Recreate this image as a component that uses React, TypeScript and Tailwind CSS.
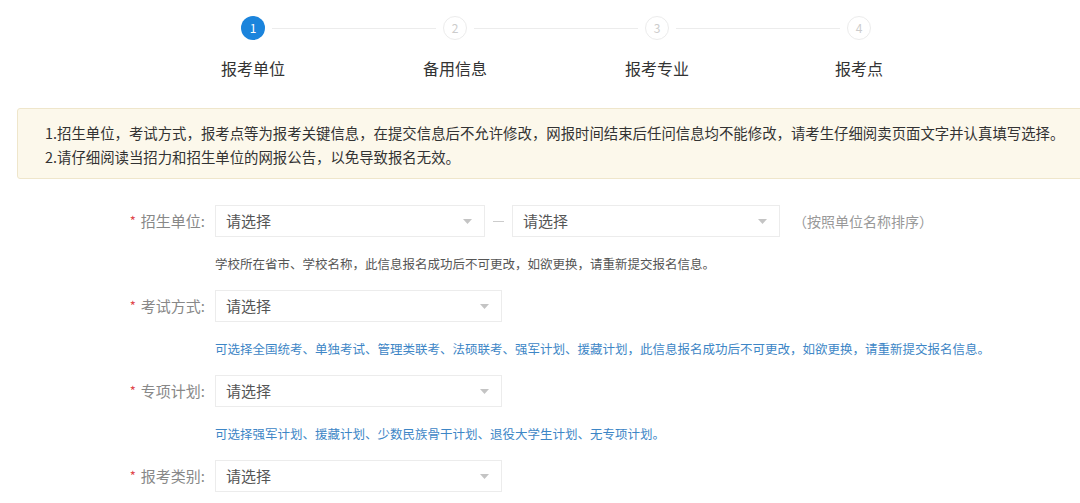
const font = { fontFamily: '"Microsoft YaHei", "Noto Sans CJK SC", "Noto Sans", sans-serif' };

const steps = ["报考单位", "备用信息", "报考专业", "报考点"];

function Caret() {
  return (
    <svg width="9" height="5" viewBox="0 0 9 5" className="shrink-0">
      <path d="M0 0 L9 0 L4.5 5 Z" fill="#c4c4c4" />
    </svg>
  );
}

function Select({ width }: { width: string }) {
  return (
    <div
      className={`flex h-[32px] items-center justify-between border border-[#ececec] bg-white pl-[10px] pr-[12px] text-[15px] text-[#555] ${width}`}
    >
      <span>请选择</span>
      <Caret />
    </div>
  );
}

function Label({ text }: { text: string }) {
  return (
    <div className="flex w-[205px] shrink-0 items-center justify-end text-[15px] text-[#888]">
      <span className="mr-[5px] text-[13px] text-[#e0474c]">*</span>
      <span>{text}:</span>
    </div>
  );
}

export default function App() {
  return (
    <div className="h-[503px] w-[1080px] overflow-hidden bg-white" style={font}>
      {/* steps */}
      <div className="flex items-center pl-[241px] pt-[16px]">
        {steps.map((s, i) => (
          <div key={s} className="flex items-center">
            <div
              className={
                i === 0
                  ? "flex h-[24px] w-[24px] items-center justify-center rounded-full bg-[#1b84dc] text-[12px] text-white"
                  : "flex h-[24px] w-[24px] items-center justify-center rounded-full border border-[#ececec] text-[12px] text-[#ccc]"
              }
            >
              {i + 1}
            </div>
            {i < steps.length - 1 && <div className="mx-[7px] h-px w-[164px] bg-[#ececec]" />}
          </div>
        ))}
      </div>
      <div className="mt-[16px] flex pl-[152px]">
        {steps.map((s) => (
          <div key={s} className="w-[202px] text-center text-[16px] leading-[24px] text-[#333]">
            {s}
          </div>
        ))}
      </div>

      {/* notice */}
      <div className="ml-[17px] mt-[28px] w-[1100px] rounded-[3px] border border-[#efe6cb] bg-[#fcf8eb] pb-[9px] pl-[27px] pt-[12px] text-[14.4px] leading-[24px] text-[#333]">
        <p>1.招生单位，考试方式，报考点等为报考关键信息，在提交信息后不允许修改，网报时间结束后任问信息均不能修改，请考生仔细阅卖页面文字并认真填写选择。</p>
        <p>2.请仔细阅读当招力和招生单位的网报公告，以免导致报名无效。</p>
      </div>

      {/* form */}
      <div className="mt-[26px] flex flex-col gap-[16px]">
        <div>
          <div className="flex items-center">
            <Label text="招生单位" />
            <div className="ml-[10px] flex items-center">
              <Select width="w-[270px]" />
              <span className="mx-[8px] h-px w-[11px] bg-[#ccc]" />
              <Select width="w-[268px]" />
              <span className="ml-[13px] text-[14px] text-[#999]">（按照单位名称排序）</span>
            </div>
          </div>
          <p className="ml-[215px] mt-[17px] text-[12.5px] leading-[20px] text-[#555]">
            学校所在省市、学校名称，此信息报名成功后不可更改，如欲更换，请重新提交报名信息。
          </p>
        </div>

        <div>
          <div className="flex items-center">
            <Label text="考试方式" />
            <div className="ml-[10px]">
              <Select width="w-[287px]" />
            </div>
          </div>
          <p className="ml-[215px] mt-[17px] text-[12.5px] leading-[20px] text-[#3d86c6]">
            可选择全国统考、单独考试、管理类联考、法硕联考、强军计划、援藏计划，此信息报名成功后不可更改，如欲更换，请重新提交报名信息。
          </p>
        </div>

        <div>
          <div className="flex items-center">
            <Label text="专项计划" />
            <div className="ml-[10px]">
              <Select width="w-[287px]" />
            </div>
          </div>
          <p className="ml-[215px] mt-[17px] text-[12.5px] leading-[20px] text-[#3d86c6]">
            可选择强军计划、援藏计划、少数民族骨干计划、退役大学生计划、无专项计划。
          </p>
        </div>

        <div className="flex items-center">
          <Label text="报考类别" />
          <div className="ml-[10px]">
            <Select width="w-[287px]" />
          </div>
        </div>
      </div>
    </div>
  );
}
